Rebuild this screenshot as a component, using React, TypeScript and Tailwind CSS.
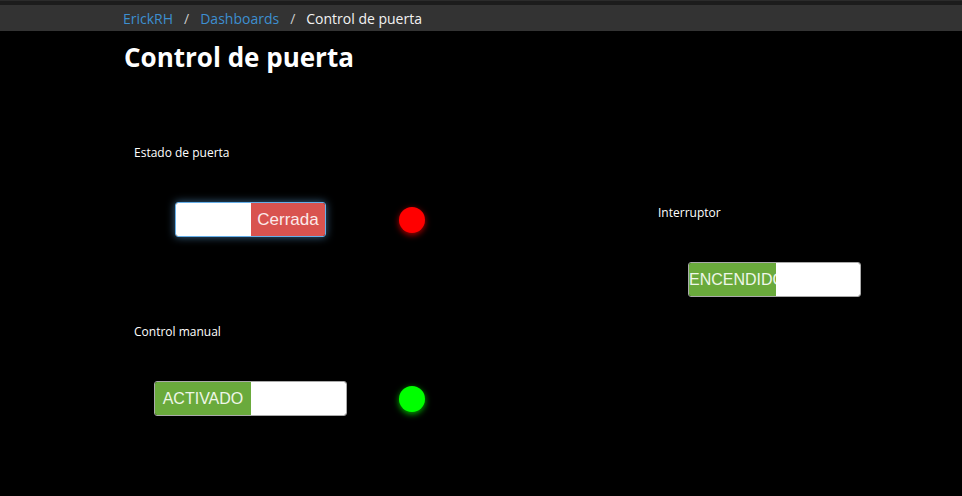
import React from "react";

function Dot({ color, glow }: { color: string; glow: string }) {
  return (
    <div
      className="h-[26px] w-[26px] rounded-full"
      style={{ backgroundColor: color, boxShadow: `0 2px 6px ${glow}` }}
    />
  );
}

const sw = { fontFamily: "'Liberation Sans', Arial, sans-serif" };

export default function App() {
  return (
    <div className="min-h-[496px] w-full bg-black text-white" style={{ fontFamily: "'Open Sans', sans-serif" }}>
      <div className="h-px bg-[#2b2b2b]" />
      <div className="h-[4px] bg-[#1c1c1c]" />
      <div className="flex h-[26px] items-center bg-[#333333] pl-[123px] text-[14px]">
        <span className="text-[#3d8fd1]">ErickRH</span>
        <span className="mx-[11px] text-[#cccccc]">/</span>
        <span className="text-[#3d8fd1]">Dashboards</span>
        <span className="mx-[11px] text-[#cccccc]">/</span>
        <span className="text-[#f2f2f2]">Control de puerta</span>
      </div>
      <div className="pl-[124px]">
        <h1 className="mt-[10px] text-[26px] font-bold leading-[32px]">Control de puerta</h1>
        <div className="flex">
          <div className="w-[524px]">
            <div className="pl-[10px] pt-[72px] text-[12px] leading-[16px]">Estado de puerta</div>
            <div className="mt-[41px] flex items-center">
              <div className="ml-[51px] flex h-[35px] w-[151px] overflow-hidden rounded-[3px] border border-[#66afe9] shadow-[0_0_8px_rgba(102,175,233,0.6)]">
                <div className="w-[75px] bg-white" />
                <div className="flex flex-1 items-center justify-center bg-[#d9534f] text-[17px] text-[#fbeaea]" style={sw}>Cerrada</div>
              </div>
              <div className="ml-[73px]">
                <Dot color="#ff0000" glow="rgba(255,0,0,0.7)" />
              </div>
            </div>
            <div className="mt-[87px] pl-[10px] text-[12px] leading-[16px]">Control manual</div>
            <div className="mt-[41px] flex items-center">
              <div className="ml-[30px] flex h-[35px] w-[193px] overflow-hidden rounded-[3px] border border-[#aaaaaa]">
                <div className="flex w-[96px] items-center justify-center bg-[#6aaa3c] text-[16px] text-[#eef6e8]" style={sw}>ACTIVADO</div>
                <div className="flex-1 bg-white" />
              </div>
              <div className="ml-[52px]">
                <Dot color="#00ff00" glow="rgba(0,255,0,0.7)" />
              </div>
            </div>
          </div>
          <div>
            <div className="pl-[10px] pt-[132px] text-[12px] leading-[16px]">Interruptor</div>
            <div className="mt-[41px] ml-[40px] flex h-[35px] w-[173px] overflow-hidden rounded-[3px] border border-[#aaaaaa]">
              <div className="flex w-[87px] items-center overflow-hidden whitespace-nowrap bg-[#6aaa3c] text-[16px] text-[#eef6e8]" style={sw}>ENCENDIDO</div>
              <div className="flex-1 bg-white" />
            </div>
          </div>
        </div>
      </div>
    </div>
  );
}
